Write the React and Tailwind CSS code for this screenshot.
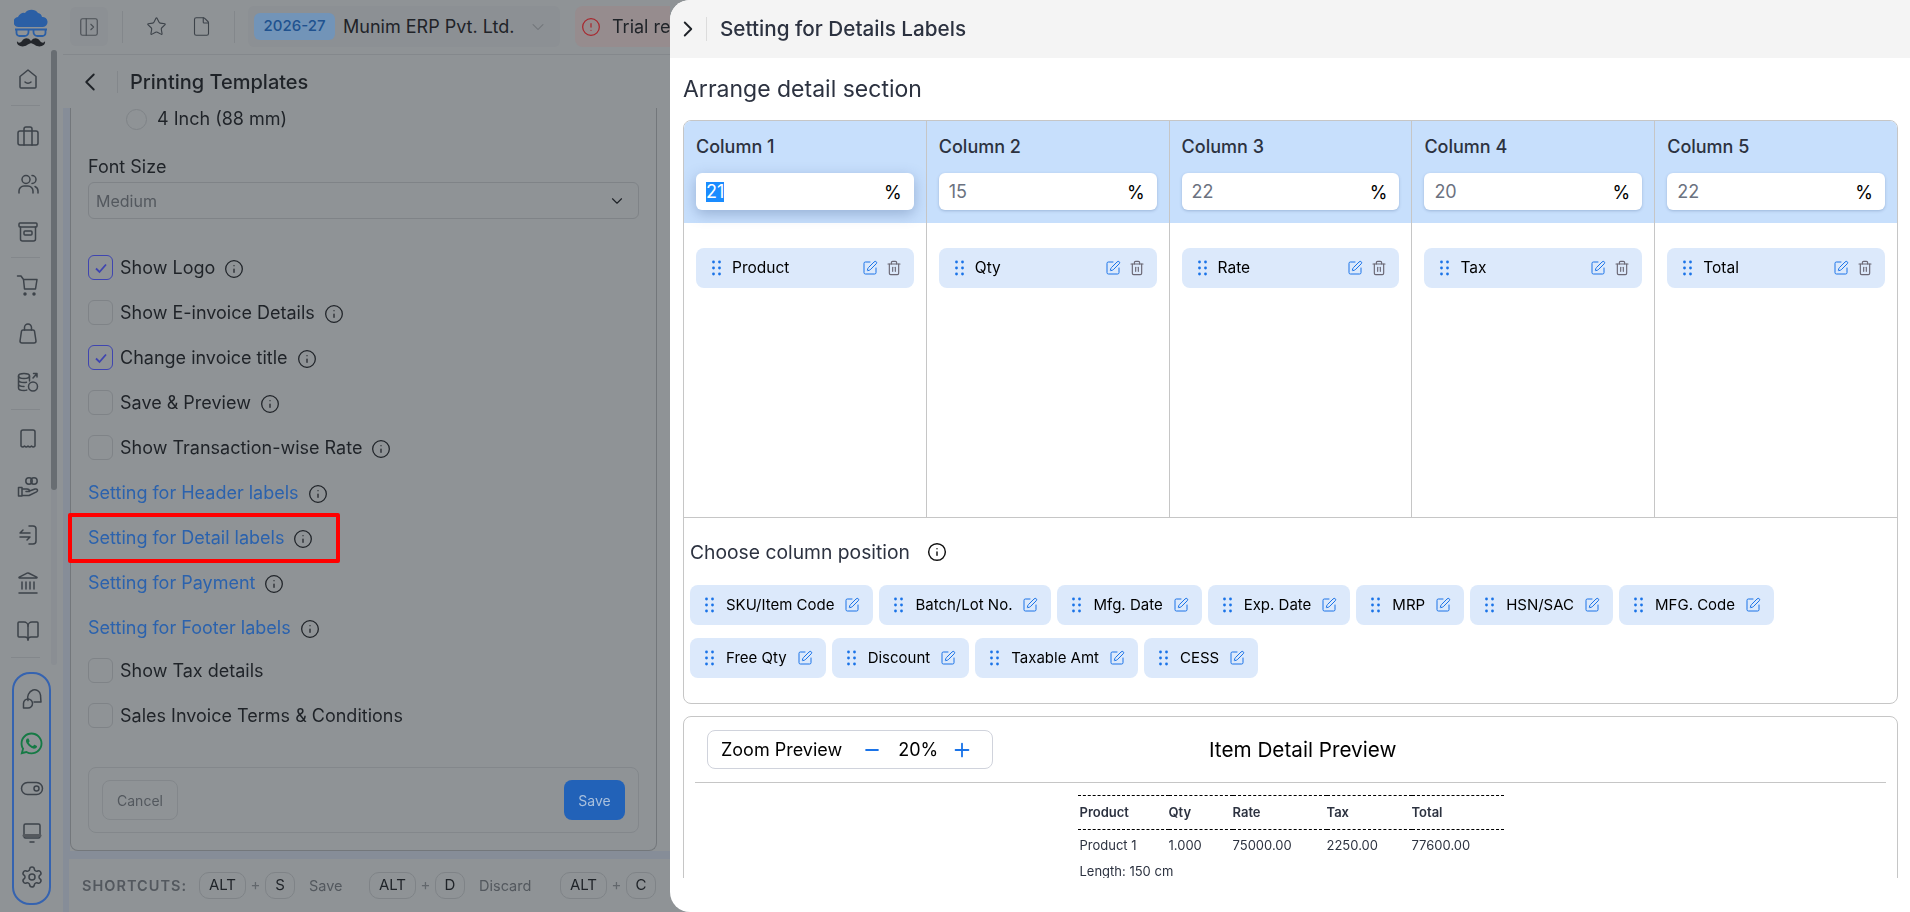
import { BookOpen, ChevronDown, ChevronLeft, ChevronRight, CircleAlert, File, Info, Landmark, Minus, PanelLeftOpen, Plus, Settings, SquarePen, Star, Trash2 } from 'lucide-react';
import { FaWhatsapp } from 'react-icons/fa';

const Icon = ({ children }) => (
    <svg width="24" height="24" viewBox="0 0 24 24" fill="none" stroke="#3d434a" strokeWidth="1.5" strokeLinecap="round" strokeLinejoin="round">
        {children}
    </svg>
);

const Logo = () => (
    <svg width="34" height="40" viewBox="0 0 34 40">
        <path d="M5 19a5 5 0 0 1-1-10 6 6 0 0 1 7-4 8 8 0 0 1 13 0 5 5 0 0 1 4 4 5 5 0 0 1 1 10z" fill="#2b5fa5" />
        <path d="M1 21.500h32M2.500 21.500v3.500a3 3 0 0 0 3 3h5a4 4 0 0 0 4-4v-2.500M19.500 21.500V24a4 4 0 0 0 4 4h5a3 3 0 0 0 3-3v-3.500" fill="none" stroke="#2b5fa5" strokeWidth="1.800" />
        <path d="M17 33C14 29 10 30 8 33 6.500 35 4 35.500 3 33c-1 5 6 7 10 4 2-1 3-1.500 4-2 1 .500 2 1 4 2 4 3 11 1 10-4-1 2.500-3.500 2-5 0-2-3-6-4-9 0z" fill="#23262b" />
    </svg>
);

const SideSlot = ({ children }) => (
    <div className="h-[48px] flex items-center justify-center">{children}</div>
);

const Sidebar = () => (
    <div className="w-[63px] shrink-0 flex bg-[#8f9396]">
        <div className="w-[51px] flex flex-col">
            <div className="h-[55px] pt-2 pl-[14px]"><Logo /></div>
            <div className="pl-[4px]">
                <SideSlot>
                    <Icon>
                        <path d="M4 9.500 12 3l8 6.500V20a1 1 0 0 1-1 1H5a1 1 0 0 1-1-1z" />
                        <path d="M9 15c1.500 1.500 4.500 1.500 6 0" />
                    </Icon>
                </SideSlot>
            </div>
            <div className="h-px mx-[11px] mt-[2px] mb-[6px] bg-[#83878b]"></div>
            <div className="pl-[4px]">
                <SideSlot>
                    <Icon>
                        <rect x="2" y="7" width="20" height="14" rx="2" />
                        <path d="M8 7V5a2 2 0 0 1 2-2h4a2 2 0 0 1 2 2v2M8 7v14M16 7v14" />
                    </Icon>
                </SideSlot>
                <SideSlot>
                    <Icon>
                        <circle cx="10" cy="7.500" r="4" />
                        <path d="M16 3.500a4 4 0 0 1 0 8M3 21v-2a5 5 0 0 1 5-5h4a5 5 0 0 1 5 5v2M22 21v-2a5 5 0 0 0-3-4.500" />
                    </Icon>
                </SideSlot>
                <SideSlot>
                    <Icon>
                        <rect x="3" y="3" width="18" height="4" rx="1" />
                        <path d="M4.500 7v12a2 2 0 0 0 2 2h11a2 2 0 0 0 2-2V7" />
                        <rect x="8" y="11" width="8" height="4" rx="1" />
                    </Icon>
                </SideSlot>
            </div>
            <div className="h-px mx-[11px] mt-[1px] mb-[4px] bg-[#83878b]"></div>
            <div className="pl-[4px]">
                <SideSlot>
                    <Icon>
                        <path d="M1.500 2H5l2.500 3.500 1 9.500h11l1.500-9.500H7.500" />
                        <circle cx="9" cy="20" r="1" fill="#3d434a" />
                        <circle cx="18" cy="20" r="1" fill="#3d434a" />
                    </Icon>
                </SideSlot>
                <SideSlot>
                    <Icon>
                        <path d="M7 8h10a1.500 1.500 0 0 1 1.500 1.200L20 19a2 2 0 0 1-2 2H6a2 2 0 0 1-2-2l1.500-9.800A1.500 1.500 0 0 1 7 8z" />
                        <path d="M8.500 8V5.500a3.500 3.500 0 0 1 7 0V8" />
                    </Icon>
                </SideSlot>
                <SideSlot>
                    <Icon>
                        <ellipse cx="8" cy="6" rx="5.500" ry="2.500" />
                        <path d="M2.500 6v12c0 1.400 2.500 2.500 5.500 2.500 1 0 2-.100 2.800-.400M2.500 10c0 1.400 2.500 2.500 5.500 2.500 1 0 1.800-.100 2.500-.300M2.500 14c0 1.400 2.500 2.500 5.500 2.500M13.500 6v5" />
                        <circle cx="17" cy="16.500" r="4.500" />
                        <path d="M17 8l4-4.500M17.500 3.500H21V7" />
                    </Icon>
                </SideSlot>
            </div>
            <div className="h-px mx-[11px] mt-[3px] mb-[5px] bg-[#83878b]"></div>
            <div className="pl-[4px]">
                <SideSlot>
                    <Icon>
                        <path d="M5 19V5a2 2 0 0 1 2-2h10a2 2 0 0 1 2 2v14q-1.750 2-3.500 0-1.750 2-3.500 0-1.750 2-3.500 0-1.750 2-3.500 0z" />
                    </Icon>
                </SideSlot>
                <SideSlot>
                    <Icon>
                        <circle cx="13" cy="6" r="3.200" />
                        <circle cx="18" cy="6" r="3.200" />
                        <path d="M2.500 12.500h3.500v8.500H2.500zM6 14h5c1.500 0 2.500 1 2.500 2.500H10M13.500 16l5.500-2c2.500-.500 3.500 1.500 1.500 2.800L13 20.500H6" />
                    </Icon>
                </SideSlot>
                <SideSlot>
                    <Icon>
                        <path d="M13 3h4a3 3 0 0 1 3 3v12a3 3 0 0 1-3 3h-4" />
                        <path d="M14 10H4l3-3M4 14h10l-3 3" />
                    </Icon>
                </SideSlot>
                <SideSlot><Landmark size={24} color="#3d434a" strokeWidth={1.5} /></SideSlot>
                <SideSlot><BookOpen size={24} color="#3d434a" strokeWidth={1.5} /></SideSlot>
            </div>
            <div className="h-px mx-[11px] mt-[2px] mb-[14px] bg-[#83878b]"></div>
            <div className="ml-3 w-[39px] h-[233px] border-2 border-[#3563b0] rounded-[18px] flex flex-col items-center pt-[3px]">
                <div className="h-[44.500px] flex items-center justify-center">
                    <Icon>
                        <path d="M8 13.500a8.500 8.500 0 0 1 5-10.500c3-1 7 1 7.500 5 .200 2 .200 4.500.500 7h-7" />
                        <path d="M8 12a4.500 4.500 0 1 1 0 9H3.500v-4.500A4.500 4.500 0 0 1 8 12z" />
                    </Icon>
                </div>
                <div className="h-[44.500px] flex items-center justify-center"><FaWhatsapp size={25} color="#157a45" /></div>
                <div className="h-[44.500px] flex items-center justify-center">
                    <Icon>
                        <rect x="1.500" y="6.500" width="21" height="12" rx="6" />
                        <circle cx="16.500" cy="12.500" r="2.500" />
                    </Icon>
                </div>
                <div className="h-[44.500px] flex items-center justify-center">
                    <Icon>
                        <rect x="4" y="3" width="16" height="14" rx="1.500" />
                        <path d="M4 14.500h16" strokeWidth="3" stroke="#55595e" />
                        <path d="M10 21h4" />
                    </Icon>
                </div>
                <div className="h-[44.500px] flex items-center justify-center"><Settings size={24} color="#3d434a" strokeWidth={1.5} /></div>
            </div>
        </div>
        <div className="w-[6px] mt-[50px] h-[615px] rounded-full bg-[#8a8e93]">
            <div className="h-[440px] rounded-full bg-[#686d72]"></div>
        </div>
    </div>
);

const TopBar = () => (
    <div className="h-[55px] shrink-0 flex items-center border-b border-[#84888c] pl-[7px] pb-[1px]">
        <div className="w-[38px] h-[39px] rounded-md bg-[#8c9094] flex items-center justify-center">
            <PanelLeftOpen size={22} color="#4b5056" strokeWidth={1.25} />
        </div>
        <div className="w-px h-[32px] bg-[#83878b] ml-[14px]"></div>
        <Star size={21} color="#3d434a" strokeWidth={1.25} className="ml-[23px]" />
        <File size={21} color="#3d434a" strokeWidth={1.25} className="ml-[24px]" />
        <div className="w-px h-[32px] bg-[#83878b] ml-[22px]"></div>
        <div className="ml-[13px] w-[312px] h-[41px] rounded-md bg-[#8c9094] flex items-center pl-[6px]">
            <span className="w-[81px] h-[27px] rounded-md bg-[#7294b8] text-[#20528f] text-[15px] font-medium flex items-center justify-center">2026-27</span>
            <span className="ml-2 text-[18px] text-[#1f2328]">Munim ERP Pvt. Ltd.</span>
            <ChevronDown size={20} color="#6f7378" className="ml-[14px]" strokeWidth={1.25} />
        </div>
        <div className="ml-[15px] w-[95px] h-[41px] rounded-l-lg bg-[#968c8e] flex items-center pl-[6px] overflow-hidden">
            <CircleAlert size={20} color="#a8282f" strokeWidth={1.5} className="shrink-0" />
            <span className="ml-[11px] text-[18px] text-[#1f2328] whitespace-nowrap">Trial re</span>
        </div>
    </div>
);

const CheckRow = ({ label, checked, info = true, className = 'h-[45px]' }) => (
    <div className={`flex items-center ${className}`}>
        <span className={`w-[25px] h-[25px] rounded-md border flex items-center justify-center ${checked ? 'border-[#3f45b0]' : 'border-[#7f8387]'}`}>
            {checked && (
                <svg width="16" height="16" viewBox="0 0 16 16" fill="none" stroke="#3f45b0" strokeWidth="1.800"><path d="M3 8.500 6.500 12 13 4.500" /></svg>
            )}
        </span>
        <span className="ml-[7px] text-[#1f2328]">{label}</span>
        {info && <Info size={20} color="#1f2328" strokeWidth={1.5} className="ml-[9px] mt-[2px]" />}
    </div>
);

const LinkRow = ({ label }) => (
    <div className="h-[45px] flex items-center">
        <span className="text-[#2b62ad]">{label}</span>
        <Info size={20} color="#1f2328" strokeWidth={1.5} className="ml-[9px] mt-[2px]" />
    </div>
);

const Shortcut = ({ k, label, wide }) => (
    <div className="flex items-center">
        <span className="w-[47px] h-[27px] rounded-[10px] border border-[#7f8387] flex items-center justify-center text-[15px] text-[#1f2328]">ALT</span>
        <span className="w-[19px] text-center text-[#62676c] text-[15px]">+</span>
        <span className="w-[30px] h-[27px] rounded-[10px] border border-[#7f8387] flex items-center justify-center text-[15px] text-[#1f2328]">{k}</span>
        {label && <span className={`text-[14.500px] text-[#53585e] ml-[14px] ${wide}`}>{label}</span>}
    </div>
);

const PrintingPanel = () => (
    <div className="flex-1 min-w-0 flex flex-col">
        <TopBar />
        <div className="h-[53px] shrink-0 flex items-center pl-[12px]">
            <ChevronLeft size={30} color="#1f2328" strokeWidth={1.5} />
            <div className="w-px h-[22px] bg-[#83878b] ml-[12px]"></div>
            <span className="ml-[12px] text-[20px] font-medium text-[#1f2328]">Printing Templates</span>
        </div>
        <div className="flex-1 flex min-h-0 flex-col">
            <div className="flex-1 min-h-0 flex">
                <div className="w-[7px] bg-[#868d98]"></div>
                <div className="w-[587px] border-x border-b border-[#73777b] rounded-b-lg px-[17px] flex flex-col text-[18px]">
                    <div className="flex items-center ml-[38px] mt-[1px] h-[21px]">
                        <span className="w-[21px] h-[21px] rounded-full border border-[#7f8387]"></span>
                        <span className="ml-[10px] -mt-[2px] text-[#1f2328]">4 Inch (88 mm)</span>
                    </div>
                    <div className="mt-[25px] h-[24px] leading-[24px] text-[#1f2328]">Font Size</div>
                    <div className="mt-[3px] h-[37px] rounded-md border border-[#7f8387] flex items-center justify-between pl-[7px] pr-[12px] text-[16px] text-[#53585e]">
                        Medium
                        <ChevronDown size={18} color="#1f2328" strokeWidth={1.5} />
                    </div>
                    <div className="mt-[26px]">
                        <CheckRow label="Show Logo" checked />
                        <CheckRow label="Show E-invoice Details" />
                        <CheckRow label="Change invoice title" checked />
                        <CheckRow label="Save & Preview" />
                        <CheckRow label="Show Transaction-wise Rate" />
                        <LinkRow label="Setting for Header labels" />
                        <LinkRow label="Setting for Detail labels" />
                        <LinkRow label="Setting for Payment" />
                        <LinkRow label="Setting for Footer labels" />
                        <CheckRow label="Show Tax details" info={false} className="h-[40px]" />
                        <CheckRow label="Sales Invoice Terms & Conditions" info={false} className="h-[40px] mt-[5px]" />
                    </div>
                    <div className="mt-auto mb-[17px] h-[66px] rounded-lg border border-[#83878b] flex items-center justify-between px-[13px]">
                        <span className="w-[76px] h-[40px] rounded-lg border border-[#83878b] flex items-center justify-center text-[14px] text-[#53585e]">Cancel</span>
                        <span className="w-[61px] h-[40px] rounded-lg bg-[#2262b8] flex items-center justify-center text-[14px] text-[#a9c0dd]">Save</span>
                    </div>
                </div>
            </div>
            <div className="h-[8px] bg-[#868d98]"></div>
            <div className="h-[53px] flex">
                <div className="w-[6px] bg-[#868d98]"></div>
                <div className="flex-1 rounded-tl-xl flex items-center pl-[13px]">
                    <span className="text-[14.500px] font-semibold tracking-[0.07em] text-[#53585e] w-[117px] whitespace-nowrap">SHORTCUTS:</span>
                    <Shortcut k="S" label="Save" wide="w-[60px]" />
                    <Shortcut k="D" label="Discard" wide="w-[81px]" />
                    <Shortcut k="C" />
                </div>
            </div>
        </div>
    </div>
);

const Dots = () => (
    <svg width="9" height="16" viewBox="0 0 9 16" fill="#1a73e8" className="shrink-0">
        <circle cx="1.500" cy="2" r="1.400" /><circle cx="7.500" cy="2" r="1.400" />
        <circle cx="1.500" cy="8" r="1.400" /><circle cx="7.500" cy="8" r="1.400" />
        <circle cx="1.500" cy="14" r="1.400" /><circle cx="7.500" cy="14" r="1.400" />
    </svg>
);

const columns = [
    { title: 'Column 1', value: '21', field: 'Product', focused: true },
    { title: 'Column 2', value: '15', field: 'Qty' },
    { title: 'Column 3', value: '22', field: 'Rate' },
    { title: 'Column 4', value: '20', field: 'Tax' },
    { title: 'Column 5', value: '22', field: 'Total' },
];

const ColumnBox = ({ column, last }) => (
    <div className={`flex-1 flex flex-col ${last ? '' : 'border-r border-[#c6c6c6]'}`}>
        <div className="h-[102px] bg-[#c7dffc] px-3 pt-[14px]">
            <div className="text-[18px] leading-[24px] font-medium text-[#2c3240]">{column.title}</div>
            <div className={`mt-[14px] h-[37px] rounded-md bg-white flex items-center justify-between pl-[10px] pr-[12px] text-[18px] ${column.focused ? 'shadow-[0_4px_14px_rgba(60,90,140,0.35)]' : 'shadow-[0_1px_3px_rgba(60,90,140,0.3)]'}`}>
                {column.focused
                    ? <span className="bg-[#1a8cff] text-white leading-[20px]">{column.value}</span>
                    : <span className="text-[#6b7280]">{column.value}</span>}
                <span className="text-[18px] text-black mt-[2px]">%</span>
            </div>
        </div>
        <div className="flex-1 px-3 pt-[25px]">
            <div className="h-[40px] rounded-lg bg-[#dce9fb] flex items-center pl-[16px] pr-3">
                <Dots />
                <span className="ml-[11px] flex-1 text-[15.500px] text-black">{column.field}</span>
                <SquarePen size={16} color="#1a73e8" strokeWidth={1.5} />
                <Trash2 size={16} color="#6b6875" strokeWidth={1.75} className="ml-[8px]" />
            </div>
        </div>
    </div>
);

const chips = ['SKU/Item Code', 'Batch/Lot No.', 'Mfg. Date', 'Exp. Date', 'MRP', 'HSN/SAC', 'MFG. Code', 'Free Qty', 'Discount', 'Taxable Amt', 'CESS'];

const DetailsDrawer = () => (
    <div className="absolute right-0 top-0 bottom-0 w-[1240px] bg-white rounded-l-[20px] overflow-hidden flex flex-col">
        <div className="h-[58px] shrink-0 bg-[#f4f4f4] flex items-center pl-[5px]">
            <ChevronRight size={26} color="#1f2328" strokeWidth={1.75} />
            <div className="w-px h-[24px] bg-[#dcdcdc] ml-[5px]"></div>
            <span className="ml-[13px] text-[20.700px] font-medium text-[#2c3240]">Setting for Details Labels</span>
        </div>
        <div className="pl-[13px] pr-3">
            <div className="mt-4 h-[30px] leading-[30px] text-[23px] text-[#2c3240]">Arrange detail section</div>
            <div className="mt-4 h-[584px] border border-[#c6c6c6] rounded-lg overflow-hidden flex flex-col">
                <div className="h-[397px] flex border-b border-[#c6c6c6]">
                    {columns.map((column, i) => (
                        <ColumnBox key={column.title} column={column} last={i === columns.length - 1} />
                    ))}
                </div>
                <div className="pl-[6px] pr-1 pt-[23px]">
                    <div className="flex items-center h-[22px] text-[19.300px] text-[#2c3240]">
                        Choose column position
                        <Info size={20} color="#111" strokeWidth={1.75} className="ml-[17px]" />
                    </div>
                    <div className="mt-[22px] flex flex-wrap gap-x-[6px] gap-y-[13px]">
                        {chips.map((chip) => (
                            <div key={chip} className="h-[40px] rounded-lg bg-[#dce9fb] flex items-center pl-[15px] pr-[13px]">
                                <Dots />
                                <span className="ml-3 text-[15px] text-black">{chip}</span>
                                <SquarePen size={16} color="#1a73e8" strokeWidth={1.5} className="ml-[10px]" />
                            </div>
                        ))}
                    </div>
                </div>
            </div>
            <div className="mt-3 h-[162px] overflow-hidden">
                <div className="h-[200px] border border-[#c6c6c6] rounded-lg px-[11px] pt-[13px]">
                    <div className="flex items-center pb-[13px] border-b border-[#c6c6c6]">
                        <div className="ml-3 w-[286px] h-[39px] rounded-lg border border-[#d0d3dc] flex items-center pl-[13px] text-[18px] text-black">
                            Zoom Preview
                            <Minus size={20} color="#1a73e8" strokeWidth={2.5} className="ml-[20px]" />
                            <span className="ml-[16px]">20%</span>
                            <Plus size={22} color="#1a73e8" strokeWidth={2} className="ml-[13px]" />
                        </div>
                        <div className="ml-[216px] text-[20.700px] text-black">Item Detail Preview</div>
                    </div>
                    <table className="mt-3 mx-auto w-[426px] table-fixed text-[13px] text-[#2c3240]">
                        <thead>
                            <tr className="h-[34px] border-y border-dashed border-black text-left">
                                <th className="w-[91px] pl-[2px] font-semibold">Product</th>
                                <th className="w-[64px] font-semibold">Qty</th>
                                <th className="w-[94px] font-semibold">Rate</th>
                                <th className="w-[85px] font-semibold">Tax</th>
                                <th className="font-semibold">Total</th>
                            </tr>
                        </thead>
                        <tbody>
                            <tr className="h-[31px]">
                                <td className="pl-[2px]">Product 1</td>
                                <td>1.000</td>
                                <td>75000.00</td>
                                <td>2250.00</td>
                                <td>77600.00</td>
                            </tr>
                            <tr className="h-[22px]">
                                <td colSpan={5} className="pl-[2px]">Length: 150 cm</td>
                            </tr>
                        </tbody>
                    </table>
                </div>
            </div>
        </div>
    </div>
);

const App = () => {
    return (
        <div className="relative h-screen w-full overflow-hidden bg-[#8f9396] font-['Inter',sans-serif]">
            <div className="h-full flex blur-[0.5px]">
                <Sidebar />
                <PrintingPanel />
            </div>
            <span className="absolute left-[68px] top-[513px] w-[272px] h-[50px] border-4 border-[#ff0000] rounded-[2px]"></span>
            <DetailsDrawer />
        </div>
    );
};

export default App;
